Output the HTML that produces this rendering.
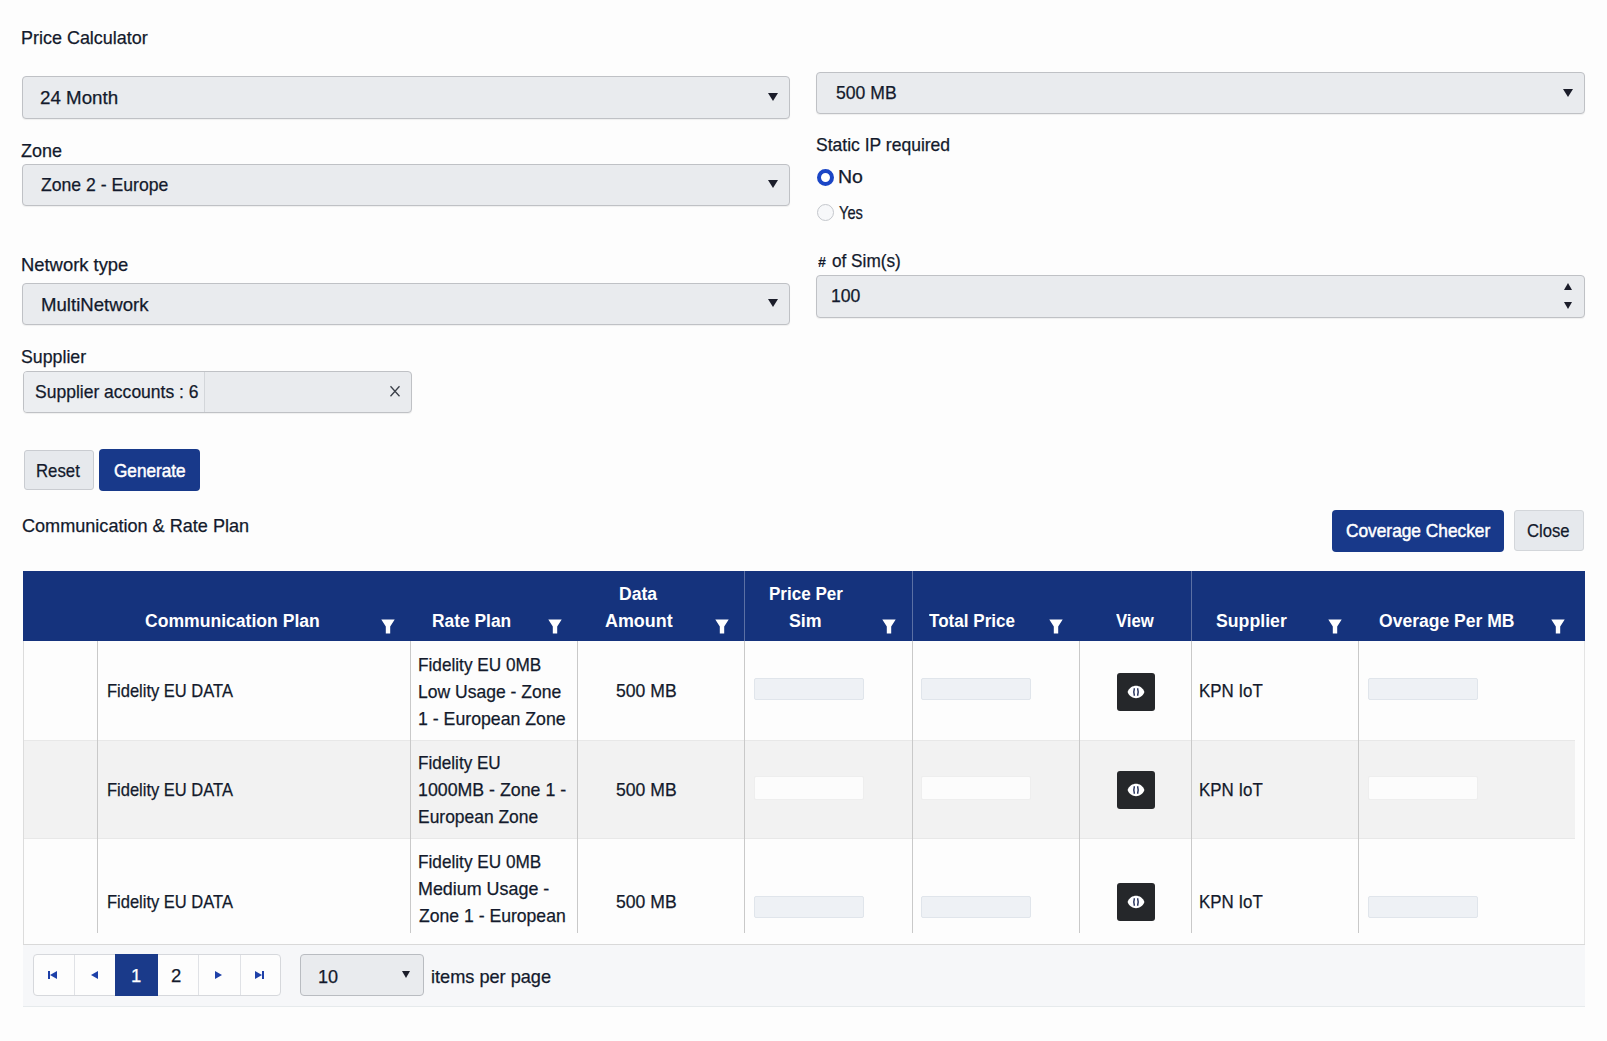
<!DOCTYPE html><html><head><meta charset="utf-8"><style>
html,body{margin:0;padding:0;background:#fdfdfd;width:1607px;height:1041px;overflow:hidden;}
body{position:relative;font-family:"Liberation Sans",sans-serif;}
.t{position:absolute;line-height:1;white-space:nowrap;transform-origin:0 0;-webkit-text-stroke:0.25px currentColor;}
.r{position:absolute;box-sizing:border-box;}
</style></head><body>
<div class="t" style="left:20.93px;top:29.34px;font-size:18.5px;color:#131a2c;transform:scaleX(0.9709);">Price Calculator</div>
<div class="r" style="left:22px;top:76px;width:768.00px;height:43.00px;background:#e9ebee;border:1px solid #bfc1c5;border-radius:4px;box-shadow:0 1px 1px rgba(0,0,0,0.06);"></div>
<div class="t" style="left:40.36px;top:88.64px;font-size:18.5px;color:#131a2c;transform:scaleX(1.0133);">24 Month</div>
<div class="r" style="left:768.0px;top:92.5px;width:0;height:0;border-left:5.0px solid transparent;border-right:5.0px solid transparent;border-top:8px solid #1b1d2a;"></div>
<div class="r" style="left:816px;top:72px;width:769.00px;height:42.00px;background:#e9ebee;border:1px solid #bfc1c5;border-radius:4px;box-shadow:0 1px 1px rgba(0,0,0,0.06);"></div>
<div class="t" style="left:835.80px;top:83.64px;font-size:18.5px;color:#131a2c;transform:scaleX(0.9510);">500 MB</div>
<div class="r" style="left:1563.0px;top:89.0px;width:0;height:0;border-left:5.0px solid transparent;border-right:5.0px solid transparent;border-top:8px solid #1b1d2a;"></div>
<div class="t" style="left:815.70px;top:136.14px;font-size:18.5px;color:#131a2c;transform:scaleX(0.9473);">Static IP required</div>
<div class="r" style="left:817px;top:168.5px;width:17.00px;height:17.00px;border-radius:50%;border:4px solid #1b46c6;background:#fff;"></div>
<div class="t" style="left:837.80px;top:168.14px;font-size:18.5px;color:#131a2c;transform:scaleX(1.0536);">No</div>
<div class="r" style="left:817px;top:204px;width:17.00px;height:17.00px;border-radius:50%;border:1px solid #c4c7cc;background:#f7f8fa;"></div>
<div class="t" style="left:839.08px;top:203.84px;font-size:18.5px;color:#131a2c;transform:scaleX(0.7921);">Yes</div>
<div class="t" style="left:21.43px;top:141.64px;font-size:18.5px;color:#131a2c;transform:scaleX(0.9716);">Zone</div>
<div class="r" style="left:22px;top:164px;width:768.00px;height:42.00px;background:#e9ebee;border:1px solid #bfc1c5;border-radius:4px;box-shadow:0 1px 1px rgba(0,0,0,0.06);"></div>
<div class="t" style="left:41.14px;top:176.14px;font-size:18.5px;color:#131a2c;transform:scaleX(0.9525);">Zone 2 - Europe</div>
<div class="r" style="left:768.0px;top:180.0px;width:0;height:0;border-left:5.0px solid transparent;border-right:5.0px solid transparent;border-top:8px solid #1b1d2a;"></div>
<div class="t" style="left:21.29px;top:255.84px;font-size:18.5px;color:#131a2c;transform:scaleX(0.9942);">Network type</div>
<div class="r" style="left:22px;top:283px;width:768.00px;height:42.00px;background:#e9ebee;border:1px solid #bfc1c5;border-radius:4px;box-shadow:0 1px 1px rgba(0,0,0,0.06);"></div>
<div class="t" style="left:40.87px;top:295.54px;font-size:18.5px;color:#131a2c;transform:scaleX(1.0055);">MultiNetwork</div>
<div class="r" style="left:768.0px;top:299.0px;width:0;height:0;border-left:5.0px solid transparent;border-right:5.0px solid transparent;border-top:8px solid #1b1d2a;"></div>
<div class="t" style="left:817.75px;top:254.95px;font-size:14px;font-weight:bold;-webkit-text-stroke:0;color:#131a2c;transform:scaleX(1.0244);">#</div>
<div class="t" style="left:831.78px;top:252.34px;font-size:18.5px;color:#131a2c;transform:scaleX(0.9296);">of Sim(s)</div>
<div class="r" style="left:816px;top:275px;width:769.00px;height:43.00px;background:#e9ebee;border:1px solid #bfc1c5;border-radius:4px;box-shadow:0 1px 1px rgba(0,0,0,0.06);"></div>
<div class="t" style="left:831.16px;top:287.04px;font-size:18.5px;color:#131a2c;transform:scaleX(0.9536);">100</div>
<div class="r" style="left:1564.0px;top:282.5px;width:0;height:0;border-left:4.0px solid transparent;border-right:4.0px solid transparent;border-bottom:7px solid #1b1d2a;"></div>
<div class="r" style="left:1564.0px;top:301.5px;width:0;height:0;border-left:4.0px solid transparent;border-right:4.0px solid transparent;border-top:7px solid #1b1d2a;"></div>
<div class="t" style="left:21.49px;top:348.34px;font-size:18.5px;color:#131a2c;transform:scaleX(0.9591);">Supplier</div>
<div class="r" style="left:23px;top:371px;width:389.00px;height:42.00px;background:#e9ebee;border:1px solid #bfc1c5;border-radius:4px;box-shadow:0 1px 1px rgba(0,0,0,0.06);"></div>
<div class="r" style="left:24px;top:372px;width:180.00px;height:40.00px;background:#eceef1;border-radius:3px 0 0 3px;"></div>
<div class="r" style="left:204px;top:372px;width:1.00px;height:40.00px;background:#d3d6da;"></div>
<div class="t" style="left:34.60px;top:382.54px;font-size:18.5px;color:#131a2c;transform:scaleX(0.9467);">Supplier accounts : 6</div>
<svg class="r" style="left:388px;top:384px" width="14" height="14" viewBox="0 0 14 14"><path d="M2.5 2.2 L11.5 12.2 M11.5 2.2 L2.5 12.2" stroke="#3a3f48" stroke-width="1.3"/></svg>
<div class="r" style="left:24px;top:450px;width:70.00px;height:40.00px;background:#e6e9ed;border:1px solid #c9ccd1;border-radius:3px;"></div>
<div class="t" style="left:36.32px;top:461.64px;font-size:18.5px;color:#131a2c;transform:scaleX(0.9063);">Reset</div>
<div class="r" style="left:99px;top:449px;width:101.00px;height:42.00px;background:#18398a;border-radius:4px;"></div>
<div class="t" style="left:114.14px;top:461.84px;font-size:18.5px;color:#fff;transform:scaleX(0.9286);-webkit-text-stroke:0.5px #fff;">Generate</div>
<div class="t" style="left:21.88px;top:517.14px;font-size:18.5px;color:#131a2c;transform:scaleX(0.9772);">Communication &amp; Rate Plan</div>
<div class="r" style="left:1332px;top:510px;width:172.00px;height:42.00px;background:#18398a;border-radius:4px;"></div>
<div class="t" style="left:1346.12px;top:522.14px;font-size:18.5px;color:#fff;transform:scaleX(0.9347);-webkit-text-stroke:0.5px #fff;">Coverage Checker</div>
<div class="r" style="left:1514px;top:510px;width:70.00px;height:41.00px;background:#e6e9ed;border:1px solid #d3d6da;border-radius:3px;"></div>
<div class="t" style="left:1527.15px;top:522.14px;font-size:18.5px;color:#131a2c;transform:scaleX(0.9004);">Close</div>
<div class="r" style="left:23px;top:571px;width:1562.00px;height:70.00px;background:#15337d;"></div>
<div class="r" style="left:743.5px;top:571px;width:1.00px;height:70.00px;background:rgba(255,255,255,0.3);"></div>
<div class="r" style="left:911.5px;top:571px;width:1.00px;height:70.00px;background:rgba(255,255,255,0.3);"></div>
<div class="r" style="left:1190.5px;top:571px;width:1.00px;height:70.00px;background:rgba(255,255,255,0.3);"></div>
<div class="t" style="left:144.58px;top:611.56px;font-size:18px;font-weight:bold;-webkit-text-stroke:0;color:#ffffff;transform:scaleX(0.9765);">Communication Plan</div>
<div class="t" style="left:431.54px;top:611.56px;font-size:18px;font-weight:bold;-webkit-text-stroke:0;color:#ffffff;transform:scaleX(0.9660);">Rate Plan</div>
<div class="t" style="left:619.23px;top:584.96px;font-size:18px;font-weight:bold;-webkit-text-stroke:0;color:#ffffff;transform:scaleX(0.9756);">Data</div>
<div class="t" style="left:604.55px;top:611.56px;font-size:18px;font-weight:bold;-webkit-text-stroke:0;color:#ffffff;transform:scaleX(0.9953);">Amount</div>
<div class="t" style="left:768.86px;top:584.96px;font-size:18px;font-weight:bold;-webkit-text-stroke:0;color:#ffffff;transform:scaleX(0.9467);">Price Per</div>
<div class="t" style="left:789.49px;top:611.56px;font-size:18px;font-weight:bold;-webkit-text-stroke:0;color:#ffffff;transform:scaleX(0.9880);">Sim</div>
<div class="t" style="left:929.31px;top:611.56px;font-size:18px;font-weight:bold;-webkit-text-stroke:0;color:#ffffff;transform:scaleX(0.9483);">Total Price</div>
<div class="t" style="left:1115.69px;top:611.56px;font-size:18px;font-weight:bold;-webkit-text-stroke:0;color:#ffffff;transform:scaleX(0.9284);">View</div>
<div class="t" style="left:1216.49px;top:611.56px;font-size:18px;font-weight:bold;-webkit-text-stroke:0;color:#ffffff;transform:scaleX(0.9829);">Supplier</div>
<div class="t" style="left:1379.28px;top:611.56px;font-size:18px;font-weight:bold;-webkit-text-stroke:0;color:#ffffff;transform:scaleX(0.9745);">Overage Per MB</div>
<svg class="r" style="left:380.7px;top:619.3px" width="14" height="15" viewBox="0 0 14 15"><path d="M0.3 0.5 H13.7 L9.2 7.5 V14.5 H4.8 V7.5 Z" fill="#fff"/></svg>
<svg class="r" style="left:547.5px;top:619.3px" width="14" height="15" viewBox="0 0 14 15"><path d="M0.3 0.5 H13.7 L9.2 7.5 V14.5 H4.8 V7.5 Z" fill="#fff"/></svg>
<svg class="r" style="left:715px;top:619.3px" width="14" height="15" viewBox="0 0 14 15"><path d="M0.3 0.5 H13.7 L9.2 7.5 V14.5 H4.8 V7.5 Z" fill="#fff"/></svg>
<svg class="r" style="left:881.8px;top:619.3px" width="14" height="15" viewBox="0 0 14 15"><path d="M0.3 0.5 H13.7 L9.2 7.5 V14.5 H4.8 V7.5 Z" fill="#fff"/></svg>
<svg class="r" style="left:1049px;top:619.3px" width="14" height="15" viewBox="0 0 14 15"><path d="M0.3 0.5 H13.7 L9.2 7.5 V14.5 H4.8 V7.5 Z" fill="#fff"/></svg>
<svg class="r" style="left:1328.4px;top:619.3px" width="14" height="15" viewBox="0 0 14 15"><path d="M0.3 0.5 H13.7 L9.2 7.5 V14.5 H4.8 V7.5 Z" fill="#fff"/></svg>
<svg class="r" style="left:1551px;top:619.3px" width="14" height="15" viewBox="0 0 14 15"><path d="M0.3 0.5 H13.7 L9.2 7.5 V14.5 H4.8 V7.5 Z" fill="#fff"/></svg>
<div class="r" style="left:23px;top:641px;width:1.00px;height:366.00px;background:#dcdcdc;"></div>
<div class="r" style="left:1584px;top:641px;width:1.00px;height:366.00px;background:#e4e4e4;"></div>
<div class="r" style="left:24px;top:741px;width:1551.00px;height:97.00px;background:#f2f2f2;"></div>
<div class="r" style="left:24px;top:740px;width:1551.00px;height:1.00px;background:#e8e8e8;"></div>
<div class="r" style="left:24px;top:838px;width:1551.00px;height:1.00px;background:#e8e8e8;"></div>
<div class="r" style="left:97px;top:641px;width:1.00px;height:292.00px;background:#c9c9c9;"></div>
<div class="r" style="left:409.5px;top:641px;width:1.00px;height:292.00px;background:#c9c9c9;"></div>
<div class="r" style="left:577px;top:641px;width:1.00px;height:292.00px;background:#c9c9c9;"></div>
<div class="r" style="left:743.5px;top:641px;width:1.00px;height:292.00px;background:#c9c9c9;"></div>
<div class="r" style="left:911.5px;top:641px;width:1.00px;height:292.00px;background:#c9c9c9;"></div>
<div class="r" style="left:1078.5px;top:641px;width:1.00px;height:292.00px;background:#c9c9c9;"></div>
<div class="r" style="left:1190.5px;top:641px;width:1.00px;height:292.00px;background:#c9c9c9;"></div>
<div class="r" style="left:1357.5px;top:641px;width:1.00px;height:292.00px;background:#c9c9c9;"></div>
<div class="t" style="left:106.55px;top:682.34px;font-size:18.5px;color:#131a2c;transform:scaleX(0.8921);">Fidelity EU DATA</div>
<div class="t" style="left:418.19px;top:656.34px;font-size:18.5px;color:#131a2c;transform:scaleX(0.9299);">Fidelity EU 0MB</div>
<div class="t" style="left:418.16px;top:683.14px;font-size:18.5px;color:#131a2c;transform:scaleX(0.9474);">Low Usage - Zone</div>
<div class="t" style="left:418.25px;top:709.94px;font-size:18.5px;color:#131a2c;transform:scaleX(0.9570);">1 - European Zone</div>
<div class="t" style="left:616.10px;top:682.34px;font-size:18.5px;color:#131a2c;transform:scaleX(0.9510);">500 MB</div>
<div class="t" style="left:1198.62px;top:682.34px;font-size:18.5px;color:#131a2c;transform:scaleX(0.9122);">KPN IoT</div>
<div class="t" style="left:106.55px;top:781.34px;font-size:18.5px;color:#131a2c;transform:scaleX(0.8921);">Fidelity EU DATA</div>
<div class="t" style="left:418.20px;top:754.34px;font-size:18.5px;color:#131a2c;transform:scaleX(0.9249);">Fidelity EU</div>
<div class="t" style="left:418.25px;top:781.14px;font-size:18.5px;color:#131a2c;transform:scaleX(0.9605);">1000MB - Zone 1 -</div>
<div class="t" style="left:418.17px;top:807.94px;font-size:18.5px;color:#131a2c;transform:scaleX(0.9425);">European Zone</div>
<div class="t" style="left:616.10px;top:781.34px;font-size:18.5px;color:#131a2c;transform:scaleX(0.9510);">500 MB</div>
<div class="t" style="left:1198.62px;top:781.34px;font-size:18.5px;color:#131a2c;transform:scaleX(0.9122);">KPN IoT</div>
<div class="t" style="left:106.55px;top:892.84px;font-size:18.5px;color:#131a2c;transform:scaleX(0.8921);">Fidelity EU DATA</div>
<div class="t" style="left:418.19px;top:853.34px;font-size:18.5px;color:#131a2c;transform:scaleX(0.9299);">Fidelity EU 0MB</div>
<div class="t" style="left:418.13px;top:880.14px;font-size:18.5px;color:#131a2c;transform:scaleX(0.9672);">Medium Usage -</div>
<div class="t" style="left:419.04px;top:906.94px;font-size:18.5px;color:#131a2c;transform:scaleX(0.9509);">Zone 1 - European</div>
<div class="t" style="left:616.10px;top:892.84px;font-size:18.5px;color:#131a2c;transform:scaleX(0.9510);">500 MB</div>
<div class="t" style="left:1198.62px;top:892.84px;font-size:18.5px;color:#131a2c;transform:scaleX(0.9122);">KPN IoT</div>
<div class="r" style="left:753.5px;top:678px;width:110.00px;height:22.00px;background:#eef1f5;border:1px solid #e0e5eb;border-radius:2px;"></div>
<div class="r" style="left:921px;top:678px;width:110.00px;height:22.00px;background:#eef1f5;border:1px solid #e0e5eb;border-radius:2px;"></div>
<div class="r" style="left:1367.5px;top:678px;width:110.00px;height:22.00px;background:#eef1f5;border:1px solid #e0e5eb;border-radius:2px;"></div>
<div class="r" style="left:753.5px;top:776px;width:110.00px;height:24.00px;background:#fcfcfc;border:1px solid #eeeeee;border-radius:2px;"></div>
<div class="r" style="left:921px;top:776px;width:110.00px;height:24.00px;background:#fcfcfc;border:1px solid #eeeeee;border-radius:2px;"></div>
<div class="r" style="left:1367.5px;top:776px;width:110.00px;height:24.00px;background:#fcfcfc;border:1px solid #eeeeee;border-radius:2px;"></div>
<div class="r" style="left:753.5px;top:895.5px;width:110.00px;height:22.00px;background:#eef1f5;border:1px solid #e0e5eb;border-radius:2px;"></div>
<div class="r" style="left:921px;top:895.5px;width:110.00px;height:22.00px;background:#eef1f5;border:1px solid #e0e5eb;border-radius:2px;"></div>
<div class="r" style="left:1367.5px;top:895.5px;width:110.00px;height:22.00px;background:#eef1f5;border:1px solid #e0e5eb;border-radius:2px;"></div>
<div class="r" style="left:1117px;top:672.5px;width:38.00px;height:38.00px;background:#25272a;border-radius:3px;"></div>
<svg class="r" style="left:1127px;top:684.5px" width="18" height="14" viewBox="0 0 18 14"><path d="M0.6 7 C3.5 -1.2 14.5 -1.2 17.4 7 C14.5 15.2 3.5 15.2 0.6 7 Z" fill="#fff"/><path d="M7.4 3.2 Q6.2 7 7.4 10.8" stroke="#1e2a55" stroke-width="1.4" fill="none"/><path d="M10.6 3.2 Q11.8 7 10.6 10.8" stroke="#1e2a55" stroke-width="1.4" fill="none"/></svg>
<div class="r" style="left:1117px;top:770.5px;width:38.00px;height:38.00px;background:#25272a;border-radius:3px;"></div>
<svg class="r" style="left:1127px;top:782.5px" width="18" height="14" viewBox="0 0 18 14"><path d="M0.6 7 C3.5 -1.2 14.5 -1.2 17.4 7 C14.5 15.2 3.5 15.2 0.6 7 Z" fill="#fff"/><path d="M7.4 3.2 Q6.2 7 7.4 10.8" stroke="#1e2a55" stroke-width="1.4" fill="none"/><path d="M10.6 3.2 Q11.8 7 10.6 10.8" stroke="#1e2a55" stroke-width="1.4" fill="none"/></svg>
<div class="r" style="left:1117px;top:882.5px;width:38.00px;height:38.00px;background:#25272a;border-radius:3px;"></div>
<svg class="r" style="left:1127px;top:894.5px" width="18" height="14" viewBox="0 0 18 14"><path d="M0.6 7 C3.5 -1.2 14.5 -1.2 17.4 7 C14.5 15.2 3.5 15.2 0.6 7 Z" fill="#fff"/><path d="M7.4 3.2 Q6.2 7 7.4 10.8" stroke="#1e2a55" stroke-width="1.4" fill="none"/><path d="M10.6 3.2 Q11.8 7 10.6 10.8" stroke="#1e2a55" stroke-width="1.4" fill="none"/></svg>
<div class="r" style="left:23px;top:944px;width:1562.00px;height:63.00px;background:#f6f7f9;border-top:1px solid #d9d9d9;border-bottom:1px solid #e6eaec;"></div>
<div class="r" style="left:32.5px;top:954px;width:248.50px;height:42.00px;background:#fdfdfd;border:1px solid #d6d8dc;border-radius:4px;"></div>
<div class="r" style="left:73.5px;top:955px;width:1.00px;height:40.00px;background:#e0e2e6;"></div>
<div class="r" style="left:197.5px;top:955px;width:1.00px;height:40.00px;background:#e0e2e6;"></div>
<div class="r" style="left:239.5px;top:955px;width:1.00px;height:40.00px;background:#e0e2e6;"></div>
<div class="r" style="left:115px;top:954px;width:42.50px;height:42.00px;background:#1a3a8a;"></div>
<div class="t" style="left:130.99px;top:967.34px;font-size:18.5px;color:#fff;">1</div>
<div class="t" style="left:171.07px;top:967.34px;font-size:18.5px;color:#131a2c;">2</div>
<div class="r" style="left:47.5px;top:971px;width:2.00px;height:8.00px;background:#1e40a8;"></div>
<div class="r" style="left:49.5px;top:970.5px;width:0;height:0;border-top:4.5px solid transparent;border-bottom:4.5px solid transparent;border-right:7px solid #1e40a8;"></div>
<div class="r" style="left:90.5px;top:970.5px;width:0;height:0;border-top:4.5px solid transparent;border-bottom:4.5px solid transparent;border-right:7px solid #1e40a8;"></div>
<div class="r" style="left:214.5px;top:970.5px;width:0;height:0;border-top:4.5px solid transparent;border-bottom:4.5px solid transparent;border-left:7px solid #1e40a8;"></div>
<div class="r" style="left:255px;top:970.5px;width:0;height:0;border-top:4.5px solid transparent;border-bottom:4.5px solid transparent;border-left:7px solid #1e40a8;"></div>
<div class="r" style="left:262px;top:971px;width:2.00px;height:8.00px;background:#1e40a8;"></div>
<div class="r" style="left:300px;top:954px;width:123.50px;height:42.00px;background:#e9ebee;border:1px solid #b9bcc1;border-radius:4px;"></div>
<div class="t" style="left:317.62px;top:967.64px;font-size:18.5px;color:#131a2c;transform:scaleX(0.9758);">10</div>
<div class="r" style="left:401.5px;top:970.5px;width:0;height:0;border-left:4.5px solid transparent;border-right:4.5px solid transparent;border-top:7px solid #1b1d2a;"></div>
<div class="t" style="left:430.79px;top:968.34px;font-size:18.5px;color:#131a2c;transform:scaleX(0.9808);">items per page</div>
</body></html>
